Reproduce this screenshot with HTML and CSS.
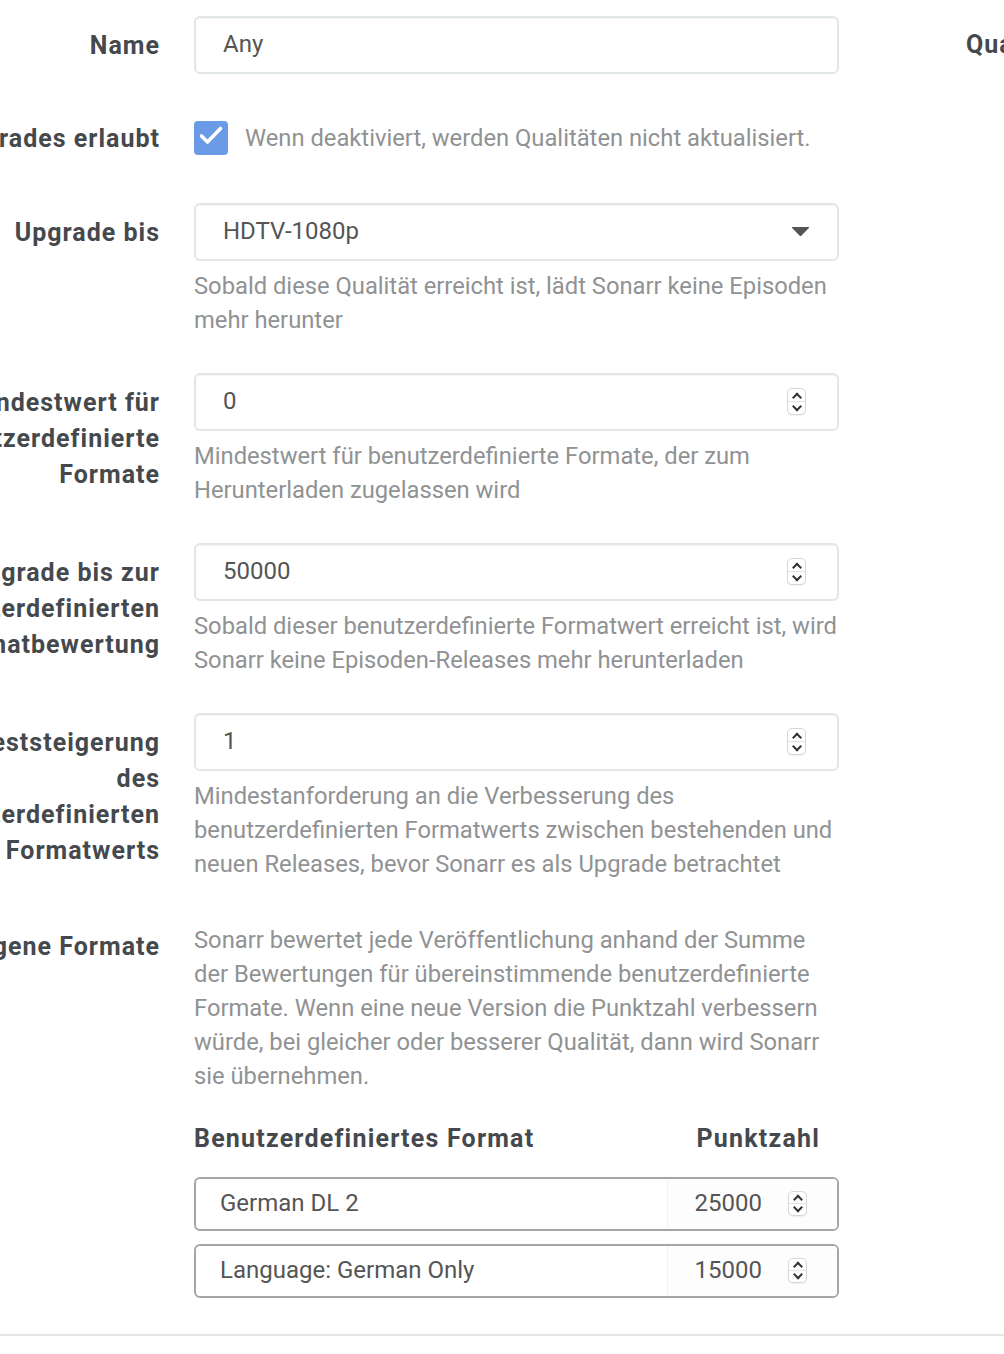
FILE: index.html
```html
<!DOCTYPE html>
<html lang="de">
<head>
<meta charset="utf-8">
<title>Qualitätsprofil bearbeiten</title>
<link rel="stylesheet" href="styles.css">
</head>
<body>
<div class="modal-body">
  <div class="layout">
    <div class="main-col">
      <div class="group first">
        <div class="label">Name</div>
        <div class="field">
          <div class="input"><span class="value">Any</span></div>
        </div>
      </div>

      <div class="group">
        <div class="label">Upgrades erlaubt</div>
        <div class="field check-field">
          <span class="checkbox">
            <svg width="34" height="34" viewBox="0 0 34 34"><path d="M7.5 15 L13.5 21 L26.5 7.5" fill="none" stroke="#fff" stroke-width="3.6" stroke-linecap="round" stroke-linejoin="round"/></svg>
          </span>
          <span class="check-help">Wenn deaktiviert, werden Qualitäten nicht aktualisiert.</span>
        </div>
      </div>

      <div class="group">
        <div class="label">Upgrade bis</div>
        <div class="field">
          <div class="input select">
            <span class="value">HDTV-1080p</span>
            <svg class="caret" width="19" height="11" viewBox="0 0 19 11"><path d="M1.5 1 H17.5 Q18.8 1 17.9 2 L10.3 9.8 Q9.5 10.6 8.7 9.8 L1.1 2 Q0.2 1 1.5 1 Z" fill="#555"/></svg>
          </div>
          <p class="help">Sobald diese Qualität erreicht ist, lädt Sonarr keine Episoden mehr herunter</p>
        </div>
      </div>

      <div class="group">
        <div class="label">Mindestwert für benutzerdefinierte Formate</div>
        <div class="field">
          <div class="input number">
            <span class="value">0</span>
            <span class="spinner"><i class="up"></i><i class="down"></i></span>
          </div>
          <p class="help">Mindestwert für benutzerdefinierte Formate, der zum Herunterladen zugelassen wird</p>
        </div>
      </div>

      <div class="group">
        <div class="label">Upgrade bis zur benutzerdefinierten Formatbewertung</div>
        <div class="field">
          <div class="input number">
            <span class="value">50000</span>
            <span class="spinner"><i class="up"></i><i class="down"></i></span>
          </div>
          <p class="help">Sobald dieser benutzerdefinierte Formatwert erreicht ist, wird Sonarr keine Episoden-Releases mehr herunterladen</p>
        </div>
      </div>

      <div class="group">
        <div class="label">Mindeststeigerung des benutzerdefinierten Formatwerts</div>
        <div class="field">
          <div class="input number">
            <span class="value">1</span>
            <span class="spinner"><i class="up"></i><i class="down"></i></span>
          </div>
          <p class="help">Mindestanforderung an die Verbesserung des benutzerdefinierten Formatwerts zwischen bestehenden und neuen Releases, bevor Sonarr es als Upgrade betrachtet</p>
        </div>
      </div>

      <div class="group last">
        <div class="label">Eigene Formate</div>
        <div class="field">
          <p class="help standalone">Sonarr bewertet jede Veröffentlichung anhand der Summe der Bewertungen für übereinstimmende benutzerdefinierte Formate. Wenn eine neue Version die Punktzahl verbessern würde, bei gleicher oder besserer Qualität, dann wird Sonarr sie übernehmen.</p>
          <div class="cf-header">
            <span>Benutzerdefiniertes Format</span>
            <span>Punktzahl</span>
          </div>
          <div class="cf-row">
            <span class="cf-name">German DL 2</span>
            <span class="cf-score"><span class="score">25000</span><span class="spinner small"><i class="up"></i><i class="down"></i></span></span>
          </div>
          <div class="cf-row">
            <span class="cf-name">Language: German Only</span>
            <span class="cf-score"><span class="score">15000</span><span class="spinner small"><i class="up"></i><i class="down"></i></span></span>
          </div>
        </div>
      </div>
    </div>

    <div class="side-col">
      <div class="label side-label">Qualitäten</div>
    </div>
  </div>
</div>
<div class="footer-rule"></div>
</body>
</html>
```

FILE: styles.css
```css
html, body {
  margin: 0;
  padding: 0;
  background: #fff;
  overflow: hidden;
}

body {
  font-family: Roboto, "Noto Sans", "Liberation Sans", sans-serif;
  color: #555;
  width: 1004px;
  height: 1354px;
}

.modal-body {
  overflow: hidden;
  padding-top: 16px;
}

.layout {
  display: flex;
  margin-left: -90px;
  width: 1400px;
}

.main-col {
  display: flex;
  flex-direction: column;
  width: 929px;
  flex: 0 0 929px;
}

.group {
  display: flex;
  align-items: flex-start;
  margin-bottom: 36px;
}

.group.first {
  margin-bottom: 35px;
}

.group.last {
  margin-bottom: 0;
}

.label {
  flex: 0 0 250px;
  width: 250px;
  margin-right: 34px;
  padding-top: 12px;
  text-align: right;
  font-weight: 700;
  font-size: 25px;
  line-height: 36px;
  letter-spacing: 1px;
  color: #45494d;
}

.field {
  flex: 0 0 645px;
  width: 645px;
  display: flex;
  flex-direction: column;
}

.input {
  box-sizing: border-box;
  height: 58px;
  border: 2px solid #e1e6e9;
  border-radius: 6px;
  display: flex;
  align-items: center;
  padding: 0 31px 0 27px;
  font-size: 24px;
  color: #555;
  box-shadow: inset 0 1px 1px rgba(0, 0, 0, 0.04);
}

.input .value {
  flex: 1;
  padding-bottom: 2px;
}

.caret {
  margin-right: -4px;
  margin-top: -2px;
}

.spinner {
  box-sizing: border-box;
  width: 19px;
  height: 27px;
  border: 1px solid #d7d7d7;
  border-radius: 5px;
  display: flex;
  flex-direction: column;
  background: #fff;
  box-shadow: 0 1px 1px rgba(0, 0, 0, 0.06);
  margin-top: -2px;
}

.spinner i {
  flex: 1;
  position: relative;
  display: block;
}

.spinner i.up {
  border-bottom: 1px solid #e4e4e4;
}

.spinner i::after {
  content: "";
  position: absolute;
  left: 50%;
  width: 5px;
  height: 5px;
  border-left: 2px solid #333;
  border-top: 2px solid #333;
}

.spinner i.up::after {
  top: 5px;
  transform: translateX(-50%) rotate(45deg);
}

.spinner i.down::after {
  top: 1px;
  transform: translateX(-50%) rotate(225deg);
}

.spinner.small {
  height: 25px;
}

.spinner.small i.up::after {
  top: 4px;
}

.spinner.small i.down::after {
  top: 0px;
}

.check-field {
  flex-direction: row;
  align-items: center;
  height: 58px;
}

.checkbox {
  width: 34px;
  height: 34px;
  border-radius: 4px;
  background: #6b9be6;
  display: flex;
  flex: 0 0 34px;
  margin-top: -1px;
}

.check-help {
  margin-left: 17px;
  font-size: 23.75px;
  color: #909293;
  line-height: 34px;
}

.help {
  margin: 8px 0 0;
  font-size: 23.75px;
  line-height: 34px;
  color: #909293;
}

.help.standalone {
  margin-top: 6px;
}

.cf-header {
  display: flex;
  justify-content: space-between;
  padding-right: 19px;
  margin-top: 28px;
  font-weight: 700;
  font-size: 25px;
  letter-spacing: 1.2px;
  line-height: 36px;
  color: #45494d;
}

.cf-row {
  box-sizing: border-box;
  height: 54px;
  border: 2px solid #a6a6a6;
  border-radius: 6px;
  display: flex;
  align-items: stretch;
  font-size: 24px;
  color: #555;
  margin-top: 13px;
  overflow: hidden;
}

.cf-header + .cf-row {
  margin-top: 20px;
}

.cf-name {
  flex: 1;
  display: flex;
  align-items: center;
  padding-left: 24px;
  padding-bottom: 3px;
}

.cf-score {
  flex: 0 0 170px;
  box-sizing: border-box;
  border-left: 1px solid #f2f2f2;
  background: #fdfdfd;
  display: flex;
  align-items: center;
  justify-content: flex-end;
  padding-right: 30px;
}

.score {
  margin-right: 26px;
  padding-bottom: 3px;
}

.side-col {
  flex: 0 0 300px;
  margin-left: 127px;
}

.side-label {
  text-align: left;
  padding-top: 11px;
}

.footer-rule {
  width: 1004px;
  margin-top: 36px;
  border-top: 2px solid #e5e5e5;
}
```
